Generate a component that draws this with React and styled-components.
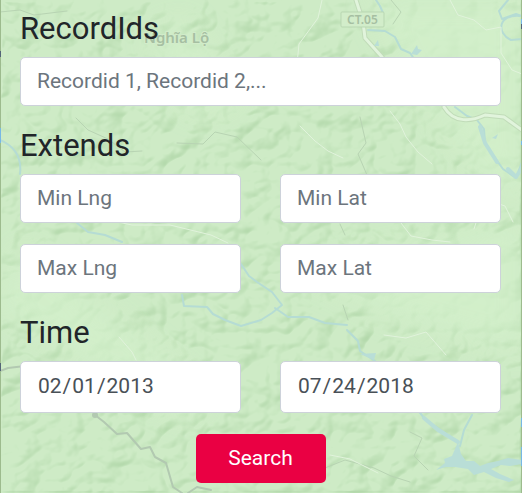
import React from "react";
import styled, { createGlobalStyle } from "styled-components";

const GlobalStyle = createGlobalStyle`
  *, *::before, *::after { box-sizing: border-box; }
  body {
    margin: 0;
    background: #cdebc6;
    color: #212529;
    font-family: Roboto, "Noto Sans", sans-serif;
  }
`;

const Page = styled.main`
  position: relative;
  min-height: 100vh;
  overflow: hidden;
`;

const MapBackdrop = styled.svg`
  position: absolute;
  inset: 0;
  width: 100%;
  height: 100%;
`;

const SearchForm = styled.form`
  position: relative;
  padding: 10px 21px 10px 20px;
`;

const Section = styled.section`
  margin-bottom: 21px;
`;

const Heading = styled.h2`
  margin: 0 0 9px;
  font-size: 31px;
  font-weight: 400;
  line-height: 38px;
`;

const FieldGrid = styled.div`
  display: grid;
  grid-template-columns: repeat(${(p) => p.$columns}, minmax(0, 1fr));
  gap: 21px 39px;
`;

const Field = styled.input`
  display: block;
  width: 100%;
  height: ${(p) => (p.type === "date" ? 52 : 49)}px;
  margin: 0;
  padding: 0 16px 2px;
  border: 1px solid #cdd2da;
  border-radius: 5px;
  background: #fff;
  color: #495057;
  font-family: inherit;
  font-size: 21px;
  line-height: 31px;
  appearance: none;

  &::placeholder {
    color: #6c757d;
    opacity: 1;
  }
  &::-webkit-calendar-picker-indicator {
    display: none;
  }
`;

const Actions = styled.div`
  display: flex;
  justify-content: center;
`;

const SubmitButton = styled.button`
  min-width: 130px;
  height: 49px;
  padding: 0 32px;
  border: 0;
  border-radius: 5px;
  background: #ea0043;
  color: #fff;
  font-family: inherit;
  font-size: 21px;
  line-height: 31px;
  cursor: pointer;
`;

function TerrainMap() {
  return (
    <MapBackdrop viewBox="0 0 522 493" preserveAspectRatio="xMidYMid slice" aria-hidden="true">
      <defs>
        <filter id="relief" x="0" y="0" width="100%" height="100%" colorInterpolationFilters="sRGB">
          <feTurbulence type="turbulence" baseFrequency="0.024 0.03" numOctaves="3" seed="12" />
          <feColorMatrix values="0 0 0 0 0  0 0 0 0 0  0 0 0 0 0  1 0 0 0 0" />
          <feGaussianBlur stdDeviation="1" />
          <feDiffuseLighting surfaceScale="8" diffuseConstant="1.3" lightingColor="#fff">
            <feDistantLight azimuth="225" elevation="50" />
          </feDiffuseLighting>
          <feColorMatrix values="0.1 0 0 0 0.706  0 0.07 0 0 0.852  0 0.1 0 0 0.675  0 0 0 0 1" />
        </filter>
        <filter id="soft"><feGaussianBlur stdDeviation="14" /></filter>
      </defs>
      <rect width="522" height="493" fill="#cdebc6" />
      <rect width="522" height="493" filter="url(#relief)" />
      <g filter="url(#soft)" fill="#d3f0cb" opacity=".8">
        <path d="M370 0H522V210L465 155 405 70Z" />
        <path d="M150 35L185 20 240 105 190 110Z" />
        <path d="M20 245L100 310 205 390 190 420 0 310Z" />
        <path d="M300 270L522 225V350L405 320Z" />
      </g>
      <g fill="none" strokeLinecap="round" strokeLinejoin="round">
        <g stroke="#b5dcd4" strokeWidth="2">
          <path d="M376 0L380 6 383 13M368 30L385 31 395 37 401 49 410 53 417 63M508 0L499 11 502 19 516 14 522 16M520 16C498 14 496 33 511 40L522 39" />
          <path d="M0 140C14 146 22 157 20 174M455 107L467 116 477 120 484 129 485 143 495 158 503 169 516 178 522 162V143" />
          <path d="M77 223L88 232 105 235 122 242M241 264L249 276 257 282 272 292 282 305 272 313 261 320M275 308L288 317 309 317 325 323 347 325M182 295L184 306 207 307 213 314 225 320 241 326 261 320" />
          <path d="M347 330L358 341 360 351 375 361M412 403L425 419 439 429 457 441M460 446L464 430 472 415" />
        </g>
        <path d="M480 127L485 143 497 162M508 169L516 177 522 168M424 418L438 430 458 442" stroke="#b9ded7" strokeWidth="4" />
        <g stroke="#b2c9b1" strokeWidth="2">
          <path d="M0 371L8 368 25 366M95 415L104 422 117 434 127 433 141 449 150 447 155 457 166 463 173 487 182 493M188 493L197 487 211 490" />
        </g>
        <g stroke="#b8d4b3" strokeWidth="1">
          <path d="M0 12L20 10 34 15 67 11M76 118L88 130 108 139 125 152 142 151M177 143L203 144 215 132 237 137 261 160M360 117L366 143 358 154 367 175M340 224L345 235 M343 305L348 320M391 0L401 12 393 24M320 470L345 460 374 468 391 476 410 482M410 432L422 438 414 456 428 470" />
        </g>
        <g stroke="#e1f3dc" strokeWidth="1">
          <path d="M322 0L318 18 310 29 299 44 297 64M450 0L458 15 474 20 486 30 501 27V53L512 70 522 74M300 126L315 141 328 151 343 158M390 111L400 124 406 137 418 152 432 164M108 220L132 225 170 225 211 235 228 243M401 223L411 236 432 240 450 242M474 229L480 210 493 202 505 206 513 222M119 337L132 352 136 360M384 335L406 338 426 332 446 355M330 455L350 459 378 473" />
        </g>
        <path d="M356 0L363 22 365 38 382 57M444 107C454 124 472 121 485 115L504 117 522 130" stroke="#c1dcb9" strokeWidth="5" />
        <path d="M356 0L363 22 365 38 382 57M444 107C454 124 472 121 485 115L504 117 522 130" stroke="#e1f4dc" strokeWidth="3" />
      </g>
      <path d="M374 46L378 40 379 46ZM411 54L417 45 418 49 422 50 417 55ZM492 138L498 134 496 139ZM360 354L376 353 374 360ZM436 470L445 463 444 459 452 456 458 442 461 454 466 461 474 461 480 466 488 463 498 461 508 458 522 460V464L510 466 501 465 491 469 500 474 514 480 509 482 496 478 484 472 474 475 468 469 455 467 446 467Z" fill="#b9ded7" />
      <circle cx="95" cy="415" r="3" fill="#b2c9b1" />
      <rect x="341" y="12" width="43" height="15" rx="1" fill="#d2edca" stroke="#b9d7b2" />
      <g fontFamily="Noto Sans, sans-serif" fontWeight="600" fill="#a6bfa2" stroke="#d2ecca" strokeWidth="2" paintOrder="stroke">
        <text x="347" y="24" fontSize="12">CT.05</text>
        <text x="144" y="43" fontSize="15">Nghĩa Lộ</text>
      </g>
      <path d="M.5 0V493M521.5 0V493" stroke="#9dbb8e" />
      <path d="M.5 128V143M521.5 19V24M521.5 141V145M521.5 418V427M521.5 447V466" stroke="#77b8e5" />
      <path d="M.5 363V371M.5 51V57M521.5 24V29" stroke="#536477" />
    </MapBackdrop>
  );
}

export default function App() {
  return (
    <>
      <GlobalStyle />
      <Page>
        <TerrainMap />
        <SearchForm onSubmit={(event) => event.preventDefault()}>
          <Section>
            <Heading id="records-heading">RecordIds</Heading>
            <FieldGrid $columns={1}>
              <Field type="text" aria-labelledby="records-heading" placeholder="Recordid 1, Recordid 2,..." />
            </FieldGrid>
          </Section>
          <Section>
            <Heading>Extends</Heading>
            <FieldGrid $columns={2}>
              <Field type="text" aria-label="Min Lng" placeholder="Min Lng" />
              <Field type="text" aria-label="Min Lat" placeholder="Min Lat" />
              <Field type="text" aria-label="Max Lng" placeholder="Max Lng" />
              <Field type="text" aria-label="Max Lat" placeholder="Max Lat" />
            </FieldGrid>
          </Section>
          <Section>
            <Heading>Time</Heading>
            <FieldGrid $columns={2}>
              <Field type="date" aria-label="Start date" defaultValue="2013-02-01" />
              <Field type="date" aria-label="End date" defaultValue="2018-07-24" />
            </FieldGrid>
          </Section>
          <Actions>
            <SubmitButton type="submit">Search</SubmitButton>
          </Actions>
        </SearchForm>
      </Page>
    </>
  );
}
